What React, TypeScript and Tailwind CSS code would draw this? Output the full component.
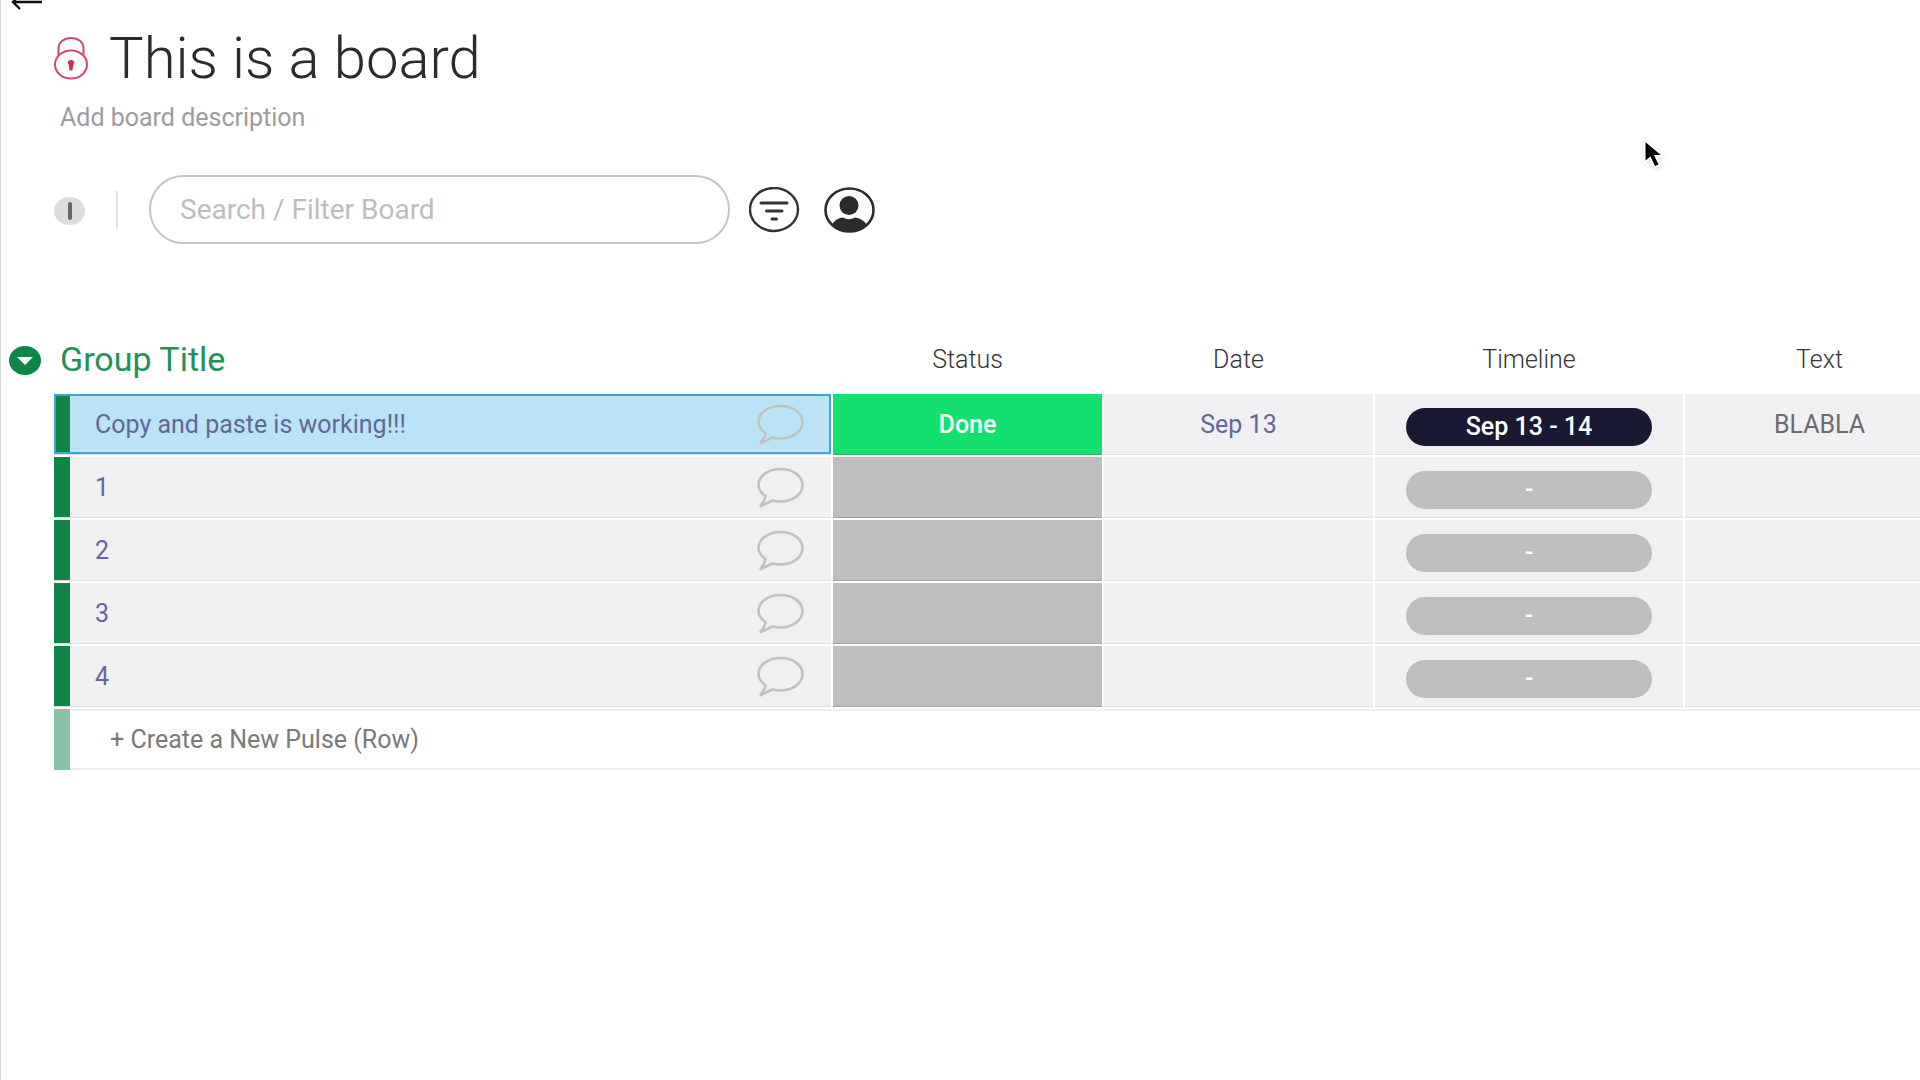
import * as React from 'react'

interface Pulse {
    id: string
    name: string
    status?: string
    date?: string
    timeline?: string
    text?: string
}

const initialPulses: Pulse[] = [
    { id: 'p0', name: 'Copy and paste is working!!!', status: 'Done', date: 'Sep 13', timeline: 'Sep 13 - 14', text: 'BLABLA' },
    { id: 'p1', name: '1' },
    { id: 'p2', name: '2' },
    { id: 'p3', name: '3' },
    { id: 'p4', name: '4' },
]

function BackArrow() {
    return (
        <svg className="h-[18px] w-[32px]" viewBox="0 0 32 18" fill="none" stroke="#111" strokeWidth={2.4}>
            <path d="M31 10H2M9 2.500L2 10l7 7" />
        </svg>
    )
}

function LockIcon() {
    return (
        <svg className="h-[44px] w-[36px]" viewBox="0 0 36 44" fill="none" stroke="#d8456f" strokeWidth={2}>
            <ellipse cx="18" cy="28.500" rx="16" ry="14" />
            <path d="M5.500 19.500V12.500C5.500 6 11 2 18 2s12.500 4 12.500 10.500v7" />
            <path d="M18 24c-3 0-4 2.500-2.400 4.600l1 5.900h2.800l1-5.900C22 26.500 21 24 18 24z" fill="#c9354a" stroke="none" />
        </svg>
    )
}

function FilterIcon() {
    return (
        <svg className="h-[46px] w-[51px]" viewBox="0 0 51 46" fill="none" stroke="#333" strokeLinecap="round">
            <ellipse cx="25" cy="22.500" rx="24" ry="21.500" strokeWidth={2.400} />
            <path d="M12 16h26M17.500 24h15.500M23 32h4.500" strokeWidth={3} />
        </svg>
    )
}

function PersonIcon() {
    return (
        <svg className="h-[46px] w-[51px]" viewBox="0 0 51 46" fill="none">
            <ellipse cx="25.500" cy="23" rx="24" ry="21.500" stroke="#2b2b2b" strokeWidth={2.600} />
            <ellipse cx="25" cy="18.500" rx="9.500" ry="9.500" fill="#2b2b2b" />
            <path d="M8 38c2-4.500 6-7 11-7.500 4 2.200 8 2.200 12 0 5 .5 9 3 11.500 7-4 4.500-10 7.500-17 7.500S12 42.500 8 38z" fill="#2b2b2b" />
        </svg>
    )
}

function BubbleIcon() {
    return (
        <svg className="h-[42px] w-[48px]" viewBox="0 0 48 42" fill="none" stroke="#c2c2c4" strokeWidth={2.600}>
            <path d="M9.500 29C5 26 2.500 22 2.500 18 2.500 9 12 2 24.500 2s22 7 22 16-9.500 16.500-22 16.500c-3 0-5.500-.3-8-1L4 39.500c2.800-3 5-6.500 5.500-10.500z" />
        </svg>
    )
}

function Cursor() {
    return (
        <svg className="pointer-events-none absolute left-[1641px] top-[138px] h-[32px] w-[26px] drop-shadow-sm" viewBox="0 0 26 32">
            <path d="M2.500 2v23l5.500-5 4.500 9.500 5.500-2.500-4.500-9h8z" fill="#000" stroke="#fff" strokeWidth={2} />
        </svg>
    )
}

interface PulseRowProps {
    pulse: Pulse
    selected: boolean
    onSelect: (id: string) => void
}

function PulseRow({ pulse, selected, onSelect }: PulseRowProps) {
    return (
        <tr className="h-[61px] text-[#63669a]">
            <td className="border-b border-[#dfdfe2] bg-[#f0f0f3] p-0">
                <div
                    onClick={() => onSelect(pulse.id)}
                    className={`flex h-[60px] items-center ${selected ? 'bg-[#bce3f5] outline-2 -outline-offset-2 outline-[#3fa3d3]' : ''}`}
                >
                    <span className={`h-full w-4 bg-[#0f8547] ${selected ? 'border-2 border-r-0 border-[#1791a3]' : ''}`} />
                    <span className="flex-1 pt-[2px] pl-[25px] text-left">{pulse.name}</span>
                    <button className="mt-[2px] mr-[27px]" aria-label="Open updates">
                        <BubbleIcon />
                    </button>
                </div>
            </td>
            <td className={`border-b px-0 pt-[2px] pb-0 font-medium text-white ${pulse.status ? 'border-[#4aa877] bg-[#13e06f]' : 'border-[#a5a5a7] bg-[#bebec0]'}`}>
                {pulse.status}
            </td>
            <td className="border-b border-[#dfdfe2] bg-[#f0f0f3] px-0 pt-[2px] pb-0">{pulse.date}</td>
            <td className="border-b border-[#dfdfe2] bg-[#f0f0f3] px-[31px] pt-[6px] pb-0 font-medium text-white">
                <div className={`h-[38px] rounded-full leading-[38px] ${pulse.timeline ? 'bg-[#1a1933]' : 'bg-[#bebec0]'}`}>
                    {pulse.timeline ?? '-'}
                </div>
            </td>
            <td className="border-b border-[#dfdfe2] bg-[#f0f0f3] px-0 pt-[2px] pb-0 text-[#6b6b6b]">{pulse.text}</td>
        </tr>
    )
}

export default function App() {
    const [selectedId, setSelectedId] = React.useState('p0')
    const [collapsed, setCollapsed] = React.useState(false)
    const [query, setQuery] = React.useState('')

    const pulses = initialPulses.filter(p => p.name.toLowerCase().includes(query.toLowerCase()))

    return (
        <main className="relative min-h-screen overflow-x-hidden border-l border-[#d6d6d6] bg-white font-[Roboto,sans-serif] text-[25px] leading-8">
            <Cursor />

            {/* Board header */}
            <header>
                <button className="ml-[10px] flex h-[10px] items-end overflow-hidden" aria-label="Back">
                    <BackArrow />
                </button>
                <div className="flex h-[96px] items-center gap-5 pl-[52px]">
                    <LockIcon />
                    <h1 className="text-[58px] font-light leading-[64px] text-[#2b2b2b]">This is a board</h1>
                </div>
                <p className="-mt-1 pl-[59px] text-[#9c9c9e]">Add board description</p>
            </header>

            {/* Search and filters */}
            <div className="mt-[41px] flex h-[69px] items-center pl-[53px]">
                <span className="mt-[2px] flex h-7 w-[31px] items-center justify-center rounded-[50%] bg-[#dedcde]">
                    <span className="h-[18px] w-1 rounded-sm bg-[#666]" />
                </span>
                <span className="ml-[31px] h-[38px] w-[2px] bg-[#e2e2e2]" />
                <input
                    type="text"
                    value={query}
                    onChange={e => setQuery(e.target.value)}
                    placeholder="Search / Filter Board"
                    aria-label="Search / Filter Board"
                    className="ml-[31px] h-[69px] w-[581px] rounded-full border-2 border-[#c6c6c6] pl-[29px] pr-6 text-[28px] text-[#333] outline-none placeholder:text-[#bdbdbf]"
                />
                <button className="ml-[19px]" aria-label="Filter">
                    <FilterIcon />
                </button>
                <button className="ml-6" aria-label="Filter by person">
                    <PersonIcon />
                </button>
            </div>

            {/* Group */}
            <div className="-mr-9 ml-[51px] mt-[82px]">
                <table className="w-full table-fixed border-separate border-spacing-[2px] text-center">
                    <colgroup>
                        <col />
                        <col className="w-[269px]" />
                        <col className="w-[269px]" />
                        <col className="w-[308px]" />
                        <col className="w-[269px]" />
                    </colgroup>
                    <thead>
                        <tr className="h-16 text-[#333]">
                            <th className="p-0 font-normal">
                                <div className="-ml-[45px] flex items-center gap-[19px]">
                                    <button
                                        onClick={() => setCollapsed(!collapsed)}
                                        aria-label={collapsed ? 'Expand group' : 'Collapse group'}
                                    >
                                        <svg className="h-[29px] w-8" viewBox="0 0 32 29">
                                            <ellipse cx="16" cy="14.500" rx="16" ry="14.500" fill="#0f8547" />
                                            <path d="M8 11h16l-8 8z" fill="#fff" />
                                        </svg>
                                    </button>
                                    <h2 className="pb-[2px] text-[34px] leading-10 text-[#23905a]">Group Title</h2>
                                </div>
                            </th>
                            <th className="p-0 font-light">Status</th>
                            <th className="p-0 font-light">Date</th>
                            <th className="p-0 font-light">Timeline</th>
                            <th className="p-0 font-light">Text</th>
                        </tr>
                    </thead>
                    {!collapsed && (
                        <tbody>
                            {pulses.map(pulse => (
                                <PulseRow
                                    key={pulse.id}
                                    pulse={pulse}
                                    selected={pulse.id === selectedId}
                                    onSelect={setSelectedId}
                                />
                            ))}
                            <tr>
                                <td colSpan={5} className="p-0">
                                    <div className="flex h-[61px]">
                                        <span className="w-4 bg-[#88c3a7]" />
                                        <button className="flex-1 border-y-2 border-[#efeff0] pl-10 text-left text-[#7a7a7a]">
                                            + Create a New Pulse (Row)
                                        </button>
                                    </div>
                                </td>
                            </tr>
                        </tbody>
                    )}
                </table>
            </div>
        </main>
    )
}
